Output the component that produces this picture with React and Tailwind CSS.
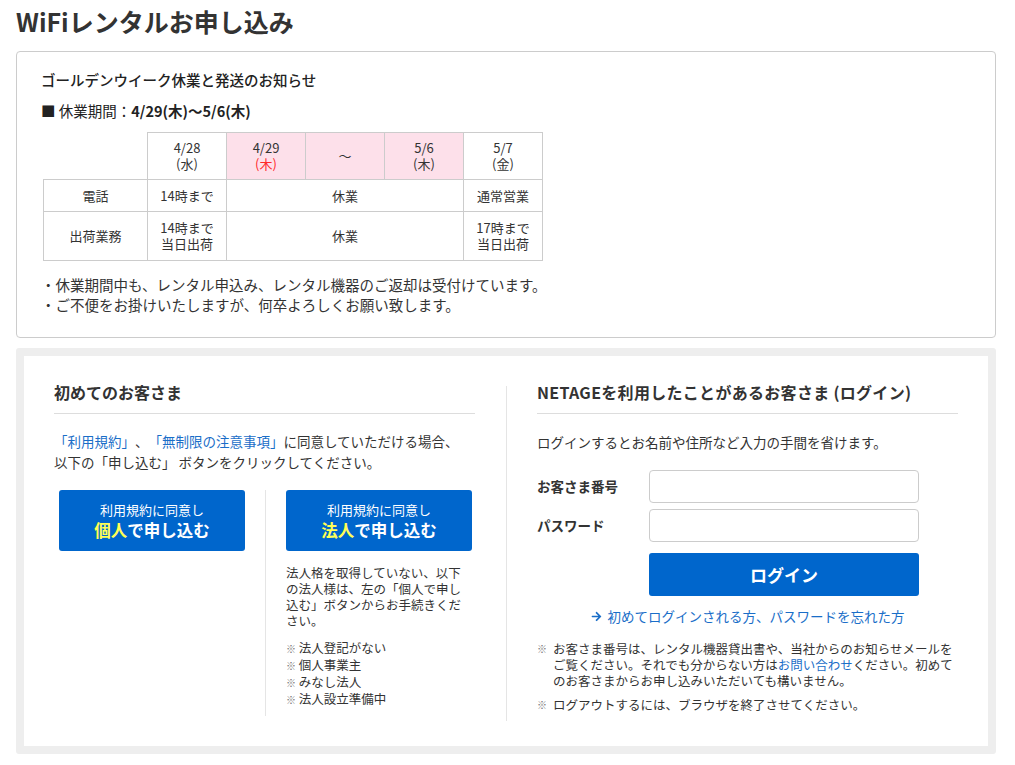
import { FaArrowRight } from "react-icons/fa"

const font = { fontFamily: '"Noto Sans CJK JP", "Noto Sans", sans-serif' }

function NoticeTable() {
    const cell = "border border-[#cccccc] text-center align-middle"
    return (
        <table className="ml-[2px] mt-[11px] border-collapse text-[13px] leading-[16px] text-[#333]">
            <tbody>
                <tr className="h-[47px]">
                    <td className="w-[104px]"></td>
                    <td className={cell + " w-[79px]"}>4/28<br />(水)</td>
                    <td className={cell + " w-[79px] bg-[#fde0ea]"}>4/29<br /><span className="text-[#ff2a2a]">(木)</span></td>
                    <td className={cell + " w-[79px] bg-[#fde0ea]"}>〜</td>
                    <td className={cell + " w-[79px] bg-[#fde0ea]"}>5/6<br />(木)</td>
                    <td className={cell + " w-[79px]"}>5/7<br />(金)</td>
                </tr>
                <tr className="h-[32px]">
                    <td className={cell}>電話</td>
                    <td className={cell}>14時まで</td>
                    <td className={cell} colSpan={3}>休業</td>
                    <td className={cell}>通常営業</td>
                </tr>
                <tr className="h-[49px]">
                    <td className={cell}>出荷業務</td>
                    <td className={cell}>14時まで<br />当日出荷</td>
                    <td className={cell} colSpan={3}>休業</td>
                    <td className={cell}>17時まで<br />当日出荷</td>
                </tr>
            </tbody>
        </table>
    )
}

function ApplyButton({ who }) {
    return (
        <button className="w-[186px] h-[61px] rounded-[3px] bg-[#0066cc] text-white flex flex-col items-center justify-center">
            <span className="text-[13px] leading-[18px]">利用規約に同意し</span>
            <span className="text-[16.5px] leading-[22px] font-bold">
                <span className="text-[#ffff55]">{who}</span>で申し込む
            </span>
        </button>
    )
}

function Note({ children, className }) {
    return (
        <div className={"flex text-[12.5px] leading-[16px] " + className}>
            <span className="w-[16px] shrink-0 text-[10px] text-[#777]">※</span>
            <p>{children}</p>
        </div>
    )
}

export default function App() {
    return (
        <div className="w-[1015px] min-h-[765px] bg-white text-[#333] [text-spacing-trim:space-all]" style={font}>
            <h1 className="px-[16px] pt-[6px] text-[25px] leading-[30px] font-bold text-[#333]">
                WiFiレンタルお申し込み
            </h1>

            {/* notice */}
            <div className="ml-[16px] w-[980px] mt-[15px] border border-[#cccccc] rounded-[4px] pl-[24px] pt-[18px] pb-[22px]">
                <p className="text-[14.5px] leading-[20px] font-medium text-[#222]">ゴールデンウイーク休業と発送のお知らせ</p>
                <p className="mt-[11px] text-[14.5px] leading-[20px] text-[#222]">
                    ■ 休業期間：<span className="font-bold">4/29(木)〜5/6(木)</span>
                </p>
                <NoticeTable />
                <ul className="mt-[14px] text-[14.5px] leading-[20px]">
                    <li>・休業期間中も、レンタル申込み、レンタル機器のご返却は受付けています。</li>
                    <li>・ご不便をお掛けいたしますが、何卒よろしくお願い致します。</li>
                </ul>
            </div>

            {/* entry */}
            <div className="ml-[16px] w-[980px] mt-[10px] bg-[#eeeeee] p-[8px] rounded-[3px]">
                <div className="bg-white px-[30px] pt-[25px] pb-[30px] flex">
                    <div className="w-[421px]">
                        <h2 className="text-[16px] leading-[22px] font-bold pb-[10px] border-b border-[#dddddd]">初めてのお客さま</h2>
                        <p className="mt-[17px] text-[13.5px] leading-[21px]">
                            <span className="text-[#1a6ec8]">「利用規約」</span>、<span className="text-[#1a6ec8]">「無制限の注意事項」</span>に同意していただける場合、<br />
                            以下の「申し込む」 ボタンをクリックしてください。
                        </p>
                        <div className="mt-[17px] flex">
                            <div className="w-[211px] pl-[5px]">
                                <ApplyButton who="個人" />
                            </div>
                            <div className="w-[210px] border-l border-[#e5e5e5] pl-[20px] pb-[8px]">
                                <ApplyButton who="法人" />
                                <p className="mt-[14px] w-[186px] text-[12.5px] leading-[16px]">
                                    法人格を取得していない、以下の法人様は、左の「個人で申し込む」ボタンからお手続きください。
                                </p>
                                <ul className="mt-[11px] text-[12.5px] leading-[16px]">
                                    <li><span className="text-[10px] text-[#777]">※</span> 法人登記がない</li>
                                    <li><span className="text-[10px] text-[#777]">※</span> 個人事業主</li>
                                    <li><span className="text-[10px] text-[#777]">※</span> みなし法人</li>
                                    <li><span className="text-[10px] text-[#777]">※</span> 法人設立準備中</li>
                                </ul>
                            </div>
                        </div>
                    </div>

                    <div className="w-px bg-[#e5e5e5] mt-[5px] mb-[-5px] ml-[31px] mr-[30px]"></div>

                    <div className="w-[421px]">
                        <h2 className="text-[16px] leading-[22px] font-bold pb-[10px] border-b border-[#dddddd] tracking-[0.3px]">NETAGEを利用したことがあるお客さま (ログイン)</h2>
                        <p className="mt-[18px] text-[13.5px] leading-[21px]">ログインするとお名前や住所など入力の手間を省けます。</p>
                        <div className="mt-[17px] flex flex-col gap-[6px]">
                            <div className="flex items-center">
                                <label className="w-[112px] text-[13.5px] font-bold">お客さま番号</label>
                                <input className="w-[270px] h-[33px] border border-[#cccccc] rounded-[4px] px-2" />
                            </div>
                            <div className="flex items-center">
                                <label className="w-[112px] text-[13.5px] font-bold">パスワード</label>
                                <input type="password" className="w-[270px] h-[33px] border border-[#cccccc] rounded-[4px] px-2" />
                            </div>
                        </div>
                        <button className="mt-[11px] ml-[112px] w-[270px] h-[43px] rounded-[3px] bg-[#0066cc] text-white text-[17px] font-bold">
                            ログイン
                        </button>
                        <p className="mt-[10px] text-[13.5px] leading-[20px] text-[#1a6ec8] flex items-center justify-center gap-[6px]">
                            <FaArrowRight className="w-[11px] h-[11px]" />
                            初めてログインされる方、パスワードを忘れた方
                        </p>
                        <Note className="mt-[15px]">
                            お客さま番号は、レンタル機器貸出書や、当社からのお知らせメールをご覧ください。それでも分からない方は<span className="text-[#1a6ec8]">お問い合わせ</span>ください。初めてのお客さまからお申し込みいただいても構いません。
                        </Note>
                        <Note className="mt-[8px]">ログアウトするには、ブラウザを終了させてください。</Note>
                    </div>
                </div>
            </div>
        </div>
    )
}
